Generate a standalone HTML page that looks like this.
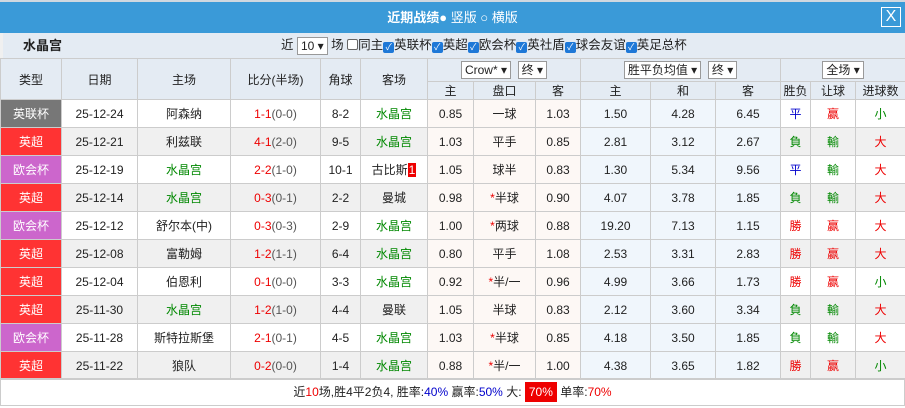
<!DOCTYPE html>
<html><head><meta charset="utf-8"><style>
*{box-sizing:border-box;margin:0;padding:0}
body{width:905px;height:408px;overflow:hidden;background:#fff;font-family:"Liberation Sans","Noto Sans CJK SC",sans-serif;font-size:12px;color:#222}
.top{height:33px;background:#3a9ad8;color:#fff;text-align:center;line-height:31px;font-size:13px;position:relative;border-top:2px solid #cfd8e0}
.top b{font-weight:bold}
.x{position:absolute;right:4px;top:5px;width:20px;height:20px;border:1px solid #fff;line-height:18px;font-size:16px;text-align:center}
.team{height:25px;background:#e4ebf3;position:relative;line-height:25px;border-left:3px solid #f0f0f0}
.team .n{position:absolute;left:20px;font-weight:bold;font-size:13px}
.team .f{position:absolute;left:278px;font-size:12.5px}
.cb{display:inline-block;width:11px;height:11px;background:#1e78d7;border-radius:2px;vertical-align:-1px;color:#fff;font-size:9px;line-height:11px;text-align:center}
.cbo{display:inline-block;width:11px;height:11px;border:1px solid #666;border-radius:2px;vertical-align:-1px;background:#fff}
.sel{display:inline-block;border:1px solid #999;background:#fff;height:18px;line-height:16px;padding:0 3px;font-size:12px;vertical-align:middle}
table{border-collapse:collapse;table-layout:fixed;width:905px;position:absolute;top:58px;left:0}
td{border:1px solid #ccc;text-align:center;height:28px;padding:0;white-space:nowrap;overflow:hidden}
.h td{background:#e4ebf3;height:23px}
.h2 td{height:17px;background:#e4ebf3}
tr.alt td{background:#f0f0f0}
td.t{color:#fff}
tr td.g0{background:#777}tr td.rd{background:#f33}tr td.pu{background:#c6c}
td.o{background:#fdf8f5!important}
td.b{background:#f0f6fc!important}
.gr{color:#080}.r{color:#e00}.bl{color:#00c}.gy{color:#555}
.ft{position:absolute;top:378px;left:0;width:905px;height:28px;border:1px solid #ccc;text-align:center;line-height:27px}
.tag{background:#e00;color:#fff;padding:3px 4px}
</style></head><body>
<div class="top"><b>近期战绩</b>● 竖版 ○ 横版<div class="x">X</div></div>
<div class="team"><span class="n">水晶宫</span><span class="f">近 <span class="sel">10 ▾</span> 场 <span class="cbo"></span>同主<span class="cb">✓</span>英联杯<span class="cb">✓</span>英超<span class="cb">✓</span>欧会杯<span class="cb">✓</span>英社盾<span class="cb">✓</span>球会友谊<span class="cb">✓</span>英足总杯</span></div>
<table>
<colgroup><col style="width:61px"><col style="width:76px"><col style="width:93px"><col style="width:90px"><col style="width:40px"><col style="width:67px"><col style="width:46px"><col style="width:62px"><col style="width:45px"><col style="width:70px"><col style="width:65px"><col style="width:65px"><col style="width:30px"><col style="width:45px"><col style="width:50px"></colgroup>
<tr class="h"><td rowspan="2">类型</td><td rowspan="2">日期</td><td rowspan="2">主场</td><td rowspan="2">比分(半场)</td><td rowspan="2">角球</td><td rowspan="2">客场</td><td colspan="3"><span class="sel">Crow* ▾</span>&nbsp; <span class="sel">终 ▾</span></td><td colspan="3"><span class="sel">胜平负均值 ▾</span>&nbsp; <span class="sel">终 ▾</span></td><td colspan="3"><span class="sel">全场 ▾</span></td></tr>
<tr class="h2"><td>主</td><td>盘口</td><td>客</td><td>主</td><td>和</td><td>客</td><td>胜负</td><td>让球</td><td>进球数</td></tr>
<tr><td class="t g0">英联杯</td><td>25-12-24</td><td>阿森纳</td><td><span class="r">1-1</span><span class="gy">(0-0)</span></td><td>8-2</td><td class="gr">水晶宫</td><td class="o">0.85</td><td class="o">一球</td><td class="o">1.03</td><td class="b">1.50</td><td class="b">4.28</td><td class="b">6.45</td><td class="bl">平</td><td class="r">赢</td><td class="gr">小</td></tr>
<tr class="alt"><td class="t rd">英超</td><td>25-12-21</td><td>利兹联</td><td><span class="r">4-1</span><span class="gy">(2-0)</span></td><td>9-5</td><td class="gr">水晶宫</td><td class="o">1.03</td><td class="o">平手</td><td class="o">0.85</td><td class="b">2.81</td><td class="b">3.12</td><td class="b">2.67</td><td class="gr">負</td><td class="gr">輸</td><td class="r">大</td></tr>
<tr><td class="t pu">欧会杯</td><td>25-12-19</td><td class="gr">水晶宫</td><td><span class="r">2-2</span><span class="gy">(1-0)</span></td><td>10-1</td><td>古比斯<span class="tag" style="padding:0 1px">1</span></td><td class="o">1.05</td><td class="o">球半</td><td class="o">0.83</td><td class="b">1.30</td><td class="b">5.34</td><td class="b">9.56</td><td class="bl">平</td><td class="gr">輸</td><td class="r">大</td></tr>
<tr class="alt"><td class="t rd">英超</td><td>25-12-14</td><td class="gr">水晶宫</td><td><span class="r">0-3</span><span class="gy">(0-1)</span></td><td>2-2</td><td>曼城</td><td class="o">0.98</td><td class="o"><span class="r">*</span>半球</td><td class="o">0.90</td><td class="b">4.07</td><td class="b">3.78</td><td class="b">1.85</td><td class="gr">負</td><td class="gr">輸</td><td class="r">大</td></tr>
<tr><td class="t pu">欧会杯</td><td>25-12-12</td><td>舒尔本(中)</td><td><span class="r">0-3</span><span class="gy">(0-3)</span></td><td>2-9</td><td class="gr">水晶宫</td><td class="o">1.00</td><td class="o"><span class="r">*</span>两球</td><td class="o">0.88</td><td class="b">19.20</td><td class="b">7.13</td><td class="b">1.15</td><td class="r">勝</td><td class="r">赢</td><td class="r">大</td></tr>
<tr class="alt"><td class="t rd">英超</td><td>25-12-08</td><td>富勒姆</td><td><span class="r">1-2</span><span class="gy">(1-1)</span></td><td>6-4</td><td class="gr">水晶宫</td><td class="o">0.80</td><td class="o">平手</td><td class="o">1.08</td><td class="b">2.53</td><td class="b">3.31</td><td class="b">2.83</td><td class="r">勝</td><td class="r">赢</td><td class="r">大</td></tr>
<tr><td class="t rd">英超</td><td>25-12-04</td><td>伯恩利</td><td><span class="r">0-1</span><span class="gy">(0-0)</span></td><td>3-3</td><td class="gr">水晶宫</td><td class="o">0.92</td><td class="o"><span class="r">*</span>半/一</td><td class="o">0.96</td><td class="b">4.99</td><td class="b">3.66</td><td class="b">1.73</td><td class="r">勝</td><td class="r">赢</td><td class="gr">小</td></tr>
<tr class="alt"><td class="t rd">英超</td><td>25-11-30</td><td class="gr">水晶宫</td><td><span class="r">1-2</span><span class="gy">(1-0)</span></td><td>4-4</td><td>曼联</td><td class="o">1.05</td><td class="o">半球</td><td class="o">0.83</td><td class="b">2.12</td><td class="b">3.60</td><td class="b">3.34</td><td class="gr">負</td><td class="gr">輸</td><td class="r">大</td></tr>
<tr><td class="t pu">欧会杯</td><td>25-11-28</td><td>斯特拉斯堡</td><td><span class="r">2-1</span><span class="gy">(0-1)</span></td><td>4-5</td><td class="gr">水晶宫</td><td class="o">1.03</td><td class="o"><span class="r">*</span>半球</td><td class="o">0.85</td><td class="b">4.18</td><td class="b">3.50</td><td class="b">1.85</td><td class="gr">負</td><td class="gr">輸</td><td class="r">大</td></tr>
<tr class="alt"><td class="t rd">英超</td><td>25-11-22</td><td>狼队</td><td><span class="r">0-2</span><span class="gy">(0-0)</span></td><td>1-4</td><td class="gr">水晶宫</td><td class="o">0.88</td><td class="o"><span class="r">*</span>半/一</td><td class="o">1.00</td><td class="b">4.38</td><td class="b">3.65</td><td class="b">1.82</td><td class="r">勝</td><td class="r">赢</td><td class="gr">小</td></tr>
</table>
<div class="ft">近<span class="r">10</span>场,胜4平2负4, 胜率:<span class="bl">40%</span> 赢率:<span class="bl">50%</span> 大: <span class="tag">70%</span> 单率:<span class="r">70%</span></div>
</body></html>
